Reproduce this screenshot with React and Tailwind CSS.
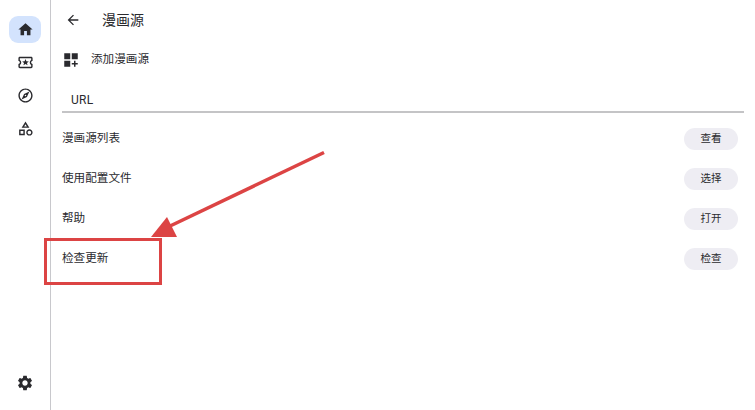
const icons = {
  home: 'M10 20v-6h4v6h5v-8h3L12 3 2 12h3v8z',
  ticket:
    'M22 10V6c0-1.1-.9-2-2-2H4c-1.1 0-1.99.9-1.99 2v4c1.1 0 1.99.9 1.99 2s-.89 2-2 2v4c0 1.1.9 2 2 2h16c1.1 0 2-.9 2-2v-4c-1.1 0-2-.9-2-2s.9-2 2-2zm-2-1.46c-1.19.69-2 1.99-2 3.46s.81 2.77 2 3.46V18H4v-2.54c1.19-.69 2-1.99 2-3.46 0-1.48-.8-2.77-1.99-3.46L4 6h16v2.54zM9.07 16L12 14.12 14.93 16l-.89-3.36 2.69-2.2-3.47-.21L12 7l-1.27 3.22-3.47.21 2.69 2.2z',
  explore:
    'M12 2C6.48 2 2 6.48 2 12s4.48 10 10 10 10-4.48 10-10S17.52 2 12 2zm0 18c-4.41 0-8-3.59-8-8s3.59-8 8-8 8 3.59 8 8-3.59 8-8 8zm-5.5-2.5l7.51-3.49L17.5 6.5 9.99 9.99 6.5 17.5zm5.5-6.6c.61 0 1.1.49 1.1 1.1s-.49 1.1-1.1 1.1-1.1-.49-1.1-1.1.49-1.1 1.1-1.1z',
  category:
    'M12 2l-5.5 9h11L12 2zm0 3.84L13.93 9h-3.87L12 5.84zM17.5 13c-2.49 0-4.5 2.01-4.5 4.5s2.01 4.5 4.5 4.5 4.5-2.01 4.5-4.5-2.01-4.5-4.5-4.5zm0 7c-1.38 0-2.5-1.12-2.5-2.5s1.12-2.5 2.5-2.5 2.5 1.12 2.5 2.5-1.12 2.5-2.5 2.5zM3 21.5h8v-8H3v8zm2-6h4v4H5v-4z',
  settings:
    'M19.14 12.94c.04-.3.06-.61.06-.94 0-.32-.02-.64-.07-.94l2.03-1.58c.18-.14.23-.41.12-.61l-1.92-3.32c-.12-.22-.37-.29-.59-.22l-2.39.96c-.5-.38-1.03-.7-1.62-.94l-.36-2.54c-.04-.24-.24-.41-.48-.41h-3.84c-.24 0-.43.17-.47.41l-.36 2.54c-.59.24-1.13.57-1.62.94l-2.39-.96c-.22-.08-.47 0-.59.22L2.74 8.87c-.12.21-.08.47.12.61l2.03 1.58c-.05.3-.09.63-.09.94s.02.64.07.94l-2.03 1.58c-.18.14-.23.41-.12.61l1.92 3.32c.12.22.37.29.59.22l2.39-.96c.5.38 1.03.7 1.62.94l.36 2.54c.05.24.24.41.48.41h3.84c.24 0 .44-.17.47-.41l.36-2.54c.59-.24 1.13-.56 1.62-.94l2.39.96c.22.08.47 0 .59-.22l1.92-3.32c.12-.22.07-.47-.12-.61l-2.01-1.58zM12 15.6c-1.98 0-3.6-1.62-3.6-3.6s1.62-3.6 3.6-3.6 3.6 1.62 3.6 3.6-1.62 3.6-3.6 3.6z',
  back: 'M20 11H7.83l5.59-5.59L12 4l-8 8 8 8 1.41-1.41L7.83 13H20v-2z',
  addBlocks: 'M3 3h8v8H3zm10 0h8v8h-8zM3 13h8v8H3zm15 0h-2v3h-3v2h3v3h2v-3h3v-2h-3z',
};

function Icon({ name, className }) {
  return (
    <svg viewBox="0 0 24 24" fill="currentColor" className={className}>
      <path d={icons[name]} />
    </svg>
  );
}

const rows = [
  { label: '漫画源列表', action: '查看' },
  { label: '使用配置文件', action: '选择' },
  { label: '帮助', action: '打开' },
  { label: '检查更新', action: '检查' },
];

function Sidebar() {
  return (
    <aside className="flex h-full w-[51px] shrink-0 flex-col items-center border-r border-[#c8c8cc] pt-4 pb-[18px]">
      <div className="flex h-[27px] w-8 items-center justify-center rounded-[9px] bg-[#d3e3fd]">
        <Icon name="home" className="h-[17px] w-[17px]" />
      </div>
      <div className="mt-2 flex h-[23px] items-center">
        <Icon name="ticket" className="h-[17px] w-[17px]" />
      </div>
      <div className="mt-[10px] flex h-[23px] items-center">
        <Icon name="explore" className="h-[17px] w-[17px]" />
      </div>
      <div className="mt-[10px] flex h-[23px] items-center">
        <Icon name="category" className="h-[17px] w-[17px]" />
      </div>
      <div className="mt-auto">
        <Icon name="settings" className="h-[18px] w-[18px]" />
      </div>
    </aside>
  );
}

export default function App() {
  return (
    <div className="relative flex h-[410px] w-[755px] overflow-hidden bg-white font-['Roboto','Noto_Sans_CJK_SC',sans-serif] text-[#2a2a2e]">
      <Sidebar />

      <main className="flex-1 pl-[11px] pr-[17px]">
        {/* Header */}
        <div className="flex h-10 items-center">
          <Icon name="back" className="ml-[3px] h-4 w-4" />
          <h1 className="ml-[21px] text-[14px] font-normal">漫画源</h1>
        </div>

        {/* Add source */}
        <div className="mt-[2px] flex h-9 items-center">
          <Icon name="addBlocks" className="h-[18px] w-[18px]" />
          <span className="ml-[11px] text-[11.6px]">添加漫画源</span>
        </div>

        {/* URL field */}
        <div className="mt-2 -mr-[6px] flex h-[27px] items-center border-b-2 border-[#c4c4c6] pt-[2px] pl-[9px] text-[12px] tracking-[0.3px]">
          URL
        </div>

        <div className="mt-[6px]">
          {rows.map((row) => (
            <div key={row.label} className="flex h-10 items-center justify-between">
              <span className="text-[11.6px]">{row.label}</span>
              <button className="h-[22px] w-[54px] rounded-full bg-[#eeedf3] text-[10.5px]">
                {row.action}
              </button>
            </div>
          ))}
        </div>
      </main>

      {/* Red annotation over the screenshot */}
      <div className="absolute left-[44px] top-[238px] h-[47px] w-[118px] border-[3px] border-[#dc4444]" />
      <svg className="absolute left-0 top-0 h-[410px] w-[755px]" viewBox="0 0 755 410" fill="none">
        <line x1="324" y1="152.500" x2="168" y2="227" stroke="#dc4444" strokeWidth="3.500" />
        <polygon points="151,237 167,217 177,237" fill="#dc4444" />
      </svg>
    </div>
  );
}
